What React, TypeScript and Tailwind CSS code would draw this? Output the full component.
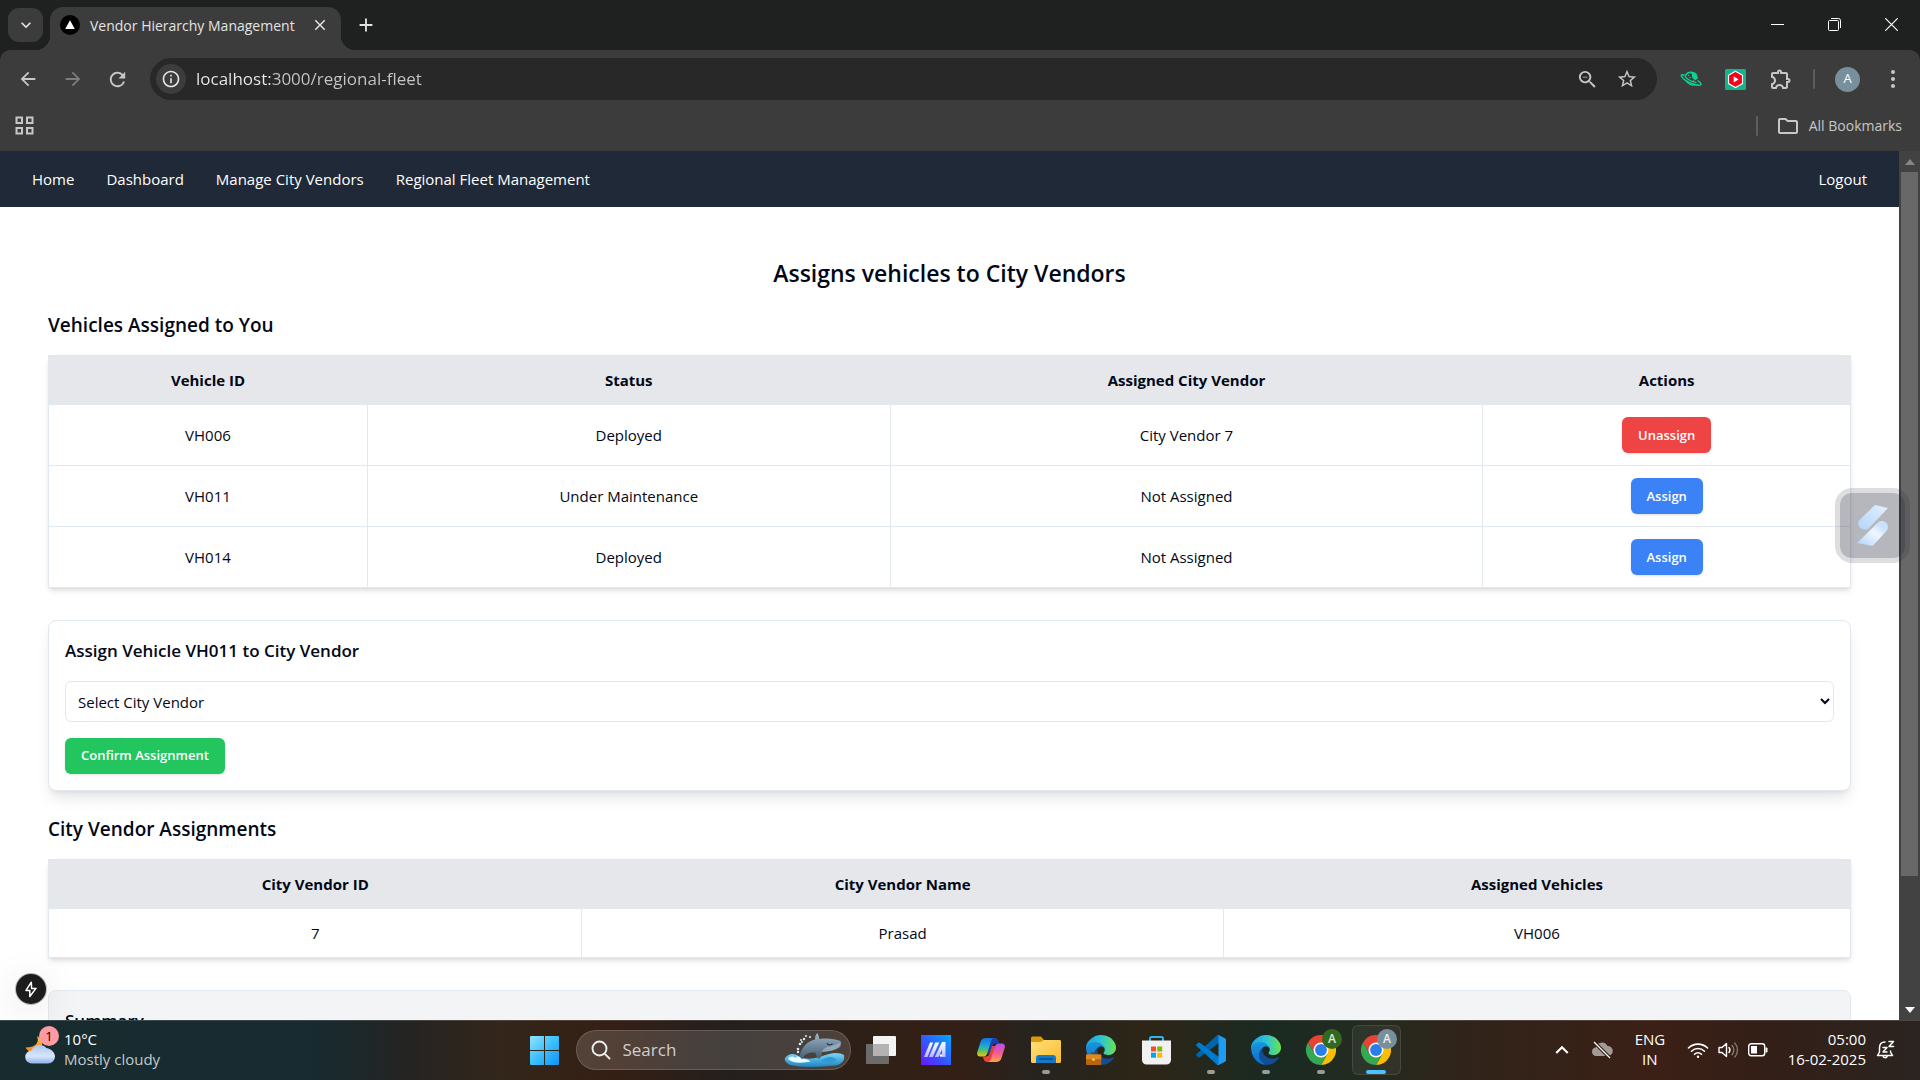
import type { ReactNode } from "react";
import {
  MdArrowBack,
  MdArrowForward,
  MdClose,
  MdExpandMore,
  MdExpandLess,
  MdInfoOutline,
  MdAdd,
  MdRefresh,
  MdStarBorder,
  MdZoomOut,
  MdOutlineExtension,
  MdOutlineFolder,
} from "react-icons/md";

const vehicles = [
  { id: "VH006", status: "Deployed", vendor: "City Vendor 7", assigned: true },
  { id: "VH011", status: "Under Maintenance", vendor: "Not Assigned", assigned: false },
  { id: "VH014", status: "Deployed", vendor: "Not Assigned", assigned: false },
];

const navLinks = ["Home", "Dashboard", "Manage City Vendors", "Regional Fleet Management"];

/* ---------- Browser chrome ---------- */

function TabStrip() {
  return (
    <div className="flex h-[50px] items-stretch">
      <div className="flex items-center pl-2">
        <button aria-label="Search tabs" className="flex h-[34px] w-[35px] items-center justify-center rounded-[11px] bg-[#3c3c3c] text-[#e3e3e3]">
          <MdExpandMore size={20} />
        </button>
      </div>
      <div className="relative ml-[7px] mt-[7px] flex w-[291px] items-center rounded-t-[13px] bg-[#3c3c3c] pb-[7px] pl-[10px] pr-2">
        <span className="absolute -left-[14px] bottom-0 size-[14px] bg-[radial-gradient(circle_at_0_0,transparent_14px,#3c3c3c_14px)]" />
        <span className="absolute -right-[14px] bottom-0 size-[14px] bg-[radial-gradient(circle_at_100%_0,transparent_14px,#3c3c3c_14px)]" />
        <svg width="20" height="20" viewBox="0 0 20 20" aria-hidden="true">
          <circle cx="10" cy="10" r="10" fill="#000" />
          <path d="M10 5.2 14.8 14H5.2z" fill="#fff" />
        </svg>
        <span className="ml-[10px] flex-1 whitespace-nowrap text-[14px] text-[#e3e3e3]">Vendor Hierarchy Management</span>
        <button aria-label="Close tab" className="flex size-[26px] items-center justify-center text-[#e3e3e3]">
          <MdClose size={18} />
        </button>
      </div>
      <button aria-label="New tab" className="ml-[13px] flex w-6 items-center justify-center text-[#e3e3e3]">
        <MdAdd size={22} />
      </button>
      <div className="flex-1" />
      <button aria-label="Minimize" className="flex h-12 w-[57px] items-center justify-center">
        <span className="h-px w-[13px] bg-white" />
      </button>
      <button aria-label="Restore" className="flex h-[49px] w-[57px] items-center justify-center">
        <svg width="13" height="13" viewBox="0 0 13 13" fill="none" stroke="#fff" aria-hidden="true">
          <rect x=".5" y="2.5" width="10" height="10" rx="1" />
          <path d="M3 .5h7.5a2 2 0 0 1 2 2V10" />
        </svg>
      </button>
      <button aria-label="Close window" className="flex h-[49px] w-[57px] items-center justify-center">
        <svg width="13" height="13" viewBox="0 0 13 13" stroke="#fff" strokeWidth="1.2" aria-hidden="true">
          <path d="M.3.3l12.4 12.4M12.7.3.3 12.7" />
        </svg>
      </button>
    </div>
  );
}

function PlanetIcon() {
  return (
    <svg width="22" height="20" viewBox="0 0 22 20" fill="none" stroke="#0bd394" aria-hidden="true">
      <path d="M5.2 7.6C6 4.500 8.600 3.300 11 3.300c4 0 6 2.700 6.200 6.200" strokeWidth="1.600" />
      <path d="M10 3.200c4.500-.4 7.200 2.600 7.300 6.600l-2 1.400C12.500 10 11.500 7.500 12 5.500z" fill="#0bd394" stroke="none" />
      <path d="M4.600 5.900C1.600 5.300.9 6 1.400 7c1.400 2.800 6.600 6.300 11.600 8 4.800 1.600 8.400 1.500 8 0-.2-1-1.500-2.200-3.400-3.500" strokeWidth="1.500" />
      <path d="M5 7.300c2.500 3.200 7 5.500 11.500 6" strokeWidth="1.300" />
      <path d="M8 6.300h1M9.500 8.500h1.200M13 12h1" strokeWidth="1.300" />
      <path d="M6 11.500c2 3.800 6 5.200 9.600 4" strokeWidth="1.500" />
    </svg>
  );
}

function PlayHexIcon() {
  return (
    <svg width="21" height="21" viewBox="0 0 21 21" aria-hidden="true">
      <rect width="21" height="21" rx="1.500" fill="#13b38b" />
      <path d="M10.500 2.200l7 4v8.400l-7 4-7-4V6.200z" fill="#f5001d" stroke="#fff" strokeWidth="1.100" />
      <path d="M8.700 7.300l4.800 3.100-4.800 3.100z" fill="#fff" />
    </svg>
  );
}

function Toolbar() {
  return (
    <div className="flex h-[58px] items-center px-[5px] text-[#c7c7c7]">
      <button aria-label="Back" className="flex w-[45px] justify-center"><MdArrowBack size={22} /></button>
      <button aria-label="Forward" className="flex w-[45px] justify-center text-[#7c7c7c]"><MdArrowForward size={22} /></button>
      <button aria-label="Reload" className="flex w-[45px] justify-center"><MdRefresh size={23} /></button>
      <div className="ml-[10px] flex h-[42px] flex-1 items-center rounded-full bg-[#282828] pl-[6px] pr-[10px]">
        <button aria-label="View site information" className="flex size-[30px] items-center justify-center rounded-full bg-[#3c3c3c] text-[#e3e3e3]">
          <MdInfoOutline size={20} />
        </button>
        {/* The host part of the address is brighter than the rest. */}
        <input
          aria-label="Address"
          defaultValue="localhost:3000/regional-fleet"
          className="ml-[10px] min-w-0 flex-1 bg-[linear-gradient(90deg,#ececec_76px,#c7c7c7_76px)] bg-clip-text text-[17px] leading-7 text-transparent outline-none"
        />
        <button aria-label="Zoom" className="flex w-10 justify-center"><MdZoomOut size={23} /></button>
        <button aria-label="Bookmark this tab" className="flex w-10 justify-center"><MdStarBorder size={22} /></button>
      </div>
      <button aria-label="Planet extension" className="ml-[11px] flex w-[45px] justify-center"><PlanetIcon /></button>
      <button aria-label="Video extension" className="flex w-[45px] justify-center"><PlayHexIcon /></button>
      <button aria-label="Extensions" className="flex w-[45px] justify-center"><MdOutlineExtension size={24} /></button>
      <div className="flex w-[22px] justify-center"><span className="h-5 w-[2px] rounded-full bg-[#5e5e5e]" /></div>
      <button aria-label="Profile" className="flex w-[45px] justify-center">
        <span className="flex size-[25px] items-center justify-center rounded-full bg-[#78909c] text-[13px] text-white">A</span>
      </button>
      <button aria-label="Menu" className="flex w-[45px] justify-center">
        <svg width="4" height="18" viewBox="0 0 4 18" fill="#c7c7c7" aria-hidden="true">
          <circle cx="2" cy="2" r="2" /><circle cx="2" cy="9" r="2" /><circle cx="2" cy="16" r="2" />
        </svg>
      </button>
    </div>
  );
}

function BookmarksBar() {
  return (
    <div className="flex h-[43px] items-center pb-2 pl-[15px] pr-[18px] text-[#c7c7c7]">
      <button aria-label="Apps">
        <svg width="19" height="19" viewBox="0 0 19 19" fill="none" stroke="#c7c7c7" strokeWidth="2" aria-hidden="true">
          <path d="M1.500 1.500h5.500v5.500H1.500zM12 1.500h5.500v5.500H12zM1.500 12h5.500v5.500H1.500zM12 12h5.500v5.500H12z" />
        </svg>
      </button>
      <div className="flex-1" />
      <span className="h-5 w-[2px] rounded-full bg-[#5e5e5e]" />
      <button className="ml-[18px] flex items-center gap-[9px] whitespace-nowrap text-[14px]">
        <MdOutlineFolder size={24} />
        All Bookmarks
      </button>
    </div>
  );
}

/* ---------- Page ---------- */

function PageNav() {
  return (
    <nav className="flex h-14 items-center justify-between bg-[#1f2937] px-8 text-[15px] text-white">
      <div className="flex gap-8">
        {navLinks.map((label) => (
          <a key={label} href="#" className="whitespace-nowrap">{label}</a>
        ))}
      </div>
      <a href="#">Logout</a>
    </nav>
  );
}

function Th({ className = "", children }: { className?: string; children: ReactNode }) {
  return <th scope="col" className={`border border-[#e2e8f0] bg-[#e5e7eb] px-4 py-3 font-bold ${className}`}>{children}</th>;
}

function Td({ children }: { children: ReactNode }) {
  return <td className="border border-[#e2e8f0] px-4 py-3">{children}</td>;
}

const buttonBase = "h-9 rounded-md px-4 text-[13px] font-semibold text-white shadow-sm";
const tableBase = "w-full border-collapse text-center text-[15px] leading-6 shadow-md";
const sectionHeading = "mb-4 text-[19px] leading-7 font-semibold";

function FleetPage() {
  return (
    <main className="px-12 pt-12 text-[#020817]">
      <h1 className="mb-5 text-center text-[23px] leading-9 font-semibold">Assigns vehicles to City Vendors</h1>

      <h2 className={sectionHeading}>Vehicles Assigned to You</h2>
      <table className={tableBase}>
        <thead>
          <tr>
            <Th className="w-[17.7%]">Vehicle ID</Th>
            <Th className="w-[29%]">Status</Th>
            <Th className="w-[32.9%]">Assigned City Vendor</Th>
            <Th className="w-[20.4%]">Actions</Th>
          </tr>
        </thead>
        <tbody>
          {vehicles.map((v) => (
            <tr key={v.id}>
              <Td>{v.id}</Td>
              <Td>{v.status}</Td>
              <Td>{v.vendor}</Td>
              <Td>
                <div className="flex justify-center">
                  {v.assigned ? (
                    <button className={`${buttonBase} bg-[#ef4444]`}>Unassign</button>
                  ) : (
                    <button className={`${buttonBase} bg-[#3b82f6]`}>Assign</button>
                  )}
                </div>
              </Td>
            </tr>
          ))}
        </tbody>
      </table>

      <section className="mt-8 rounded-lg border border-[#e2e8f0] bg-white p-4 shadow-lg">
        <h3 className="mb-4 text-[17px] leading-7 font-semibold">
          <label htmlFor="vendor">Assign Vehicle VH011 to City Vendor</label>
        </h3>
        <select id="vendor" className="mb-4 block h-[41px] w-full rounded-md border border-[#e2e8f0] bg-white px-2 text-[15px]">
          <option>Select City Vendor</option>
          <option>Prasad</option>
        </select>
        <button className={`${buttonBase} block bg-[#22c55e]`}>Confirm Assignment</button>
      </section>

      <h2 className={`${sectionHeading} mt-6`}>City Vendor Assignments</h2>
      <table className={tableBase}>
        <thead>
          <tr>
            <Th className="w-[29.6%]">City Vendor ID</Th>
            <Th className="w-[35.6%]">City Vendor Name</Th>
            <Th>Assigned Vehicles</Th>
          </tr>
        </thead>
        <tbody>
          <tr>
            <Td>7</Td>
            <Td>Prasad</Td>
            <Td>VH006</Td>
          </tr>
        </tbody>
      </table>

      <section className="mt-8 rounded-lg border border-[#e2e8f0] bg-[#f3f4f6] p-4">
        <h3 className="text-[17px] leading-7 font-semibold">Summary</h3>
      </section>
    </main>
  );
}

function Scrollbar() {
  return (
    <div aria-hidden="true" className="flex w-[21px] shrink-0 flex-col items-center bg-[#424242]">
      <span className="flex h-[21px] items-center">
        <svg width="10" height="6" viewBox="0 0 10 6"><path d="M5 0l5 6H0z" fill="#868686" /></svg>
      </span>
      <span className="min-h-0 w-[17px] flex-[704] bg-[#686868]" />
      <span className="min-h-0 flex-[123]" />
      <span className="flex h-[21px] items-center">
        <svg width="10" height="6" viewBox="0 0 10 6"><path d="M0 0h10L5 6z" fill="#fff" /></svg>
      </span>
    </div>
  );
}

function FloatingWidget() {
  return (
    <button aria-label="Open assistant" className="absolute right-[10px] top-[337px] size-[75px] rounded-[17px] bg-[#1f2339]/15 p-[5px]">
      <span className="flex size-full items-center justify-center rounded-xl bg-[#1a1c2a]/20">
        <svg width="32" height="42" viewBox="0 0 32 42" aria-hidden="true">
          <defs>
            <linearGradient id="wing-a" x1="1" y1="0" x2="0" y2="1">
              <stop offset="0" stopColor="#e3f1ff" /><stop offset="1" stopColor="#b3d4fa" />
            </linearGradient>
            <linearGradient id="wing-b" x1="1" y1="0" x2="0" y2="1">
              <stop offset=".2" stopColor="#c9e1fb" /><stop offset=".45" stopColor="#eef7ff" /><stop offset="1" stopColor="#aed0f8" />
            </linearGradient>
          </defs>
          <path d="M18 0l13 3L11 24c-2 1.500-5 .5-7.500-1C.5 20.500.5 17 3 14.500z" fill="url(#wing-a)" />
          <path d="M22 16.500c2-1.200 5-.5 7 1 2.500 2.500 2.500 6 .5 8.500L15.500 41 0 38z" fill="url(#wing-b)" />
        </svg>
      </span>
    </button>
  );
}

function DevBadge() {
  return (
    <button aria-label="Build status" className="absolute bottom-4 left-4 flex size-[30px] items-center justify-center rounded-full bg-[#1c1c1c] shadow-[0_0_0_1px_#33333355,0_8px_40px_0_rgba(0,0,0,0.14)]">
      <svg width="12" height="17" viewBox="0 0 12 17" fill="none" stroke="#fff" strokeWidth="1.500" strokeLinejoin="round" aria-hidden="true">
        <path d="M6.300 1.200 1 9.400h3.800V15.500L11 7.400H6.600z" />
      </svg>
    </button>
  );
}

/* ---------- Taskbar icons ---------- */

function WeatherIcon() {
  return (
    <svg width="30" height="30" viewBox="0 0 30 30" aria-hidden="true">
      <defs>
        <linearGradient id="moon" x1="0" y1="0" x2="0" y2="1">
          <stop offset="0" stopColor="#f9c22e" /><stop offset="1" stopColor="#f08a1c" />
        </linearGradient>
        <linearGradient id="cloud" x1="0" y1="0" x2="0" y2="1">
          <stop offset="0" stopColor="#a9c7f7" /><stop offset=".6" stopColor="#d9e6fb" /><stop offset="1" stopColor="#8db0ee" />
        </linearGradient>
      </defs>
      <path d="M12 1c2.500 5 0 11.500-11.500 11.500C3 17 9 19 14 15s4-11-2-14z" fill="url(#moon)" />
      <path d="M7 28.500a6.500 6.500 0 0 1-.5-13A9 9 0 0 1 21.500 13c5 1 8.500 4.500 8.500 8.500a7 7 0 0 1-7 7z" fill="url(#cloud)" />
    </svg>
  );
}

function StartIcon() {
  return (
    <svg width="29" height="29" viewBox="0 0 29 29" aria-hidden="true">
      <defs>
        <linearGradient id="start" x1="0" y1="0" x2="1" y2="1">
          <stop offset="0" stopColor="#8fe3ff" /><stop offset=".5" stopColor="#3cc0fc" /><stop offset="1" stopColor="#0f93f5" />
        </linearGradient>
      </defs>
      <path d="M1 0h13v14H0V1a1 1 0 0 1 1-1zM15 0h13a1 1 0 0 1 1 1v13H15zM0 15h14v14H1a1 1 0 0 1-1-1zM15 15h14v13a1 1 0 0 1-1 1H15z" fill="url(#start)" />
    </svg>
  );
}

function WhaleIcon() {
  return (
    <svg width="62" height="34" viewBox="0 0 62 34" aria-hidden="true">
      <defs>
        <linearGradient id="whale" x1="0" y1="0" x2="0" y2="1">
          <stop offset="0" stopColor="#9db4c6" /><stop offset="1" stopColor="#435d74" />
        </linearGradient>
        <linearGradient id="sea" x1="0" y1="0" x2="0" y2="1">
          <stop offset="0" stopColor="#7fd6f5" /><stop offset="1" stopColor="#1b86c4" />
        </linearGradient>
      </defs>
      <path d="M1 25c4-5 10-5 15-1 10 4 19 0 29-3 6-2 12-1 15 1 1 5-1 8-6 10-12 2-36 3-48 0C3 30 0 28 1 25z" fill="url(#sea)" />
      <path d="M15 25C17 14 24 8 31 6.500 31 3 32 1 33.500 0c1 2 1.500 4 2 6 8-1 16 0 21 2 1 2 1 4-.5 6-5 3.500-12 4.500-18 5 0 3-1 5-3 7-2-2-3.500-4-3.500-6.500-7 0-11 1-12.500 6z" fill="url(#whale)" />
      <path d="M56 10c-4 2-8 3-13 4-3 2-5 3-5 5 6-.5 11-1.500 14-3 3-1.500 4.500-3.500 4-6z" fill="#b9c8d4" opacity=".55" />
      <path d="M43 10c1 2.500 4 2.500 5.500.500" stroke="#243442" strokeWidth="1.200" fill="none" />
      <path d="M4 26c2-3 5-3 7-1 3-3 6-1 6.500 1.500 3-1 7 0 9 2C20 30 9 31 4 26z" fill="#eafaff" />
      <g fill="#d5effb"><circle cx="14" cy="16" r="1.300" /><circle cx="16" cy="11" r="1.300" /><circle cx="20" cy="6" r="1.200" /><circle cx="17" cy="7" r="1" /><circle cx="26" cy="4" r="1" /><circle cx="14" cy="19" r="1.200" /><circle cx="22" cy="3" r="1" /><circle cx="18" cy="9" r="1" /></g>
      <path d="M37 28c6-5 12-5 16-1-4 3-10 3-16 1z" fill="#2c9bd6" />
    </svg>
  );
}

function TaskViewIcon() {
  return (
    <svg width="30" height="28" viewBox="0 0 30 28" aria-hidden="true">
      <rect y="8" width="23" height="20" rx="1" fill="#6b6b6b" />
      <rect x="7" width="23" height="20" rx="1" fill="#f3f3f3" />
      <rect x="7" y="8" width="16" height="12" fill="#b5b3b2" />
    </svg>
  );
}

function SlashAppIcon() {
  return (
    <svg width="30" height="30" viewBox="0 0 30 30" aria-hidden="true">
      <defs>
        <linearGradient id="slash" x1="1" y1="0" x2="0" y2="1">
          <stop offset="0" stopColor="#00a8ff" /><stop offset=".5" stopColor="#2f5dff" /><stop offset="1" stopColor="#6a14ff" />
        </linearGradient>
        <linearGradient id="stroke" x1="0" y1="0" x2="0" y2="1">
          <stop offset="0" stopColor="#fff" /><stop offset="1" stopColor="#b9b8ff" />
        </linearGradient>
      </defs>
      <rect width="30" height="30" fill="url(#slash)" />
      <path d="M3 22 9 7.500h3.200L6.500 22z" fill="url(#stroke)" />
      <path d="M8 22 14.200 7.500h4L11.800 22z" fill="url(#stroke)" />
      <path d="M13.800 22 21 7h3.500v15H21v-7.500L17.500 22z" fill="url(#stroke)" />
      <circle cx="20" cy="20.500" r="1.300" fill="#fff" />
    </svg>
  );
}

function CopilotIcon() {
  return (
    <svg width="28" height="26" viewBox="0 0 28 26" aria-hidden="true">
      <defs>
        <linearGradient id="cop-a" x1="0" y1="0" x2="0" y2="1">
          <stop offset="0" stopColor="#1b6fe0" /><stop offset=".4" stopColor="#14a6dc" /><stop offset=".7" stopColor="#5fc25c" /><stop offset="1" stopColor="#f2c400" />
        </linearGradient>
        <linearGradient id="cop-b" x1="0" y1="0" x2="0" y2="1">
          <stop offset="0" stopColor="#b44ff0" /><stop offset=".5" stopColor="#ee5a94" /><stop offset="1" stopColor="#ffa14a" />
        </linearGradient>
      </defs>
      <path d="M14 1h4c2 0 3 1.500 3.500 3l.8 2.500H19c-2 0-3 1-3.600 3L13 17H10z" fill="#1c3fae" />
      <path d="M14 25h-4c-2 0-3-1.500-3.500-3L6 19.500h3c2 0 3-1 3.600-3L15 9h3z" fill="#e8423c" />
      <path d="M9 1h8c-2 .5-2.700 2-3.300 4l-3 10c-.8 3-2 4.500-4.700 4.500H3C.5 19.500-.3 17.500.3 15L3.500 5C4.300 2.400 6 1 9 1z" fill="url(#cop-a)" />
      <path d="M19 25h-8c2-.5 2.700-2 3.300-4l3-10c.8-3 2-4.500 4.700-4.500h3c2.500 0 3.300 2 2.700 4.500l-3.200 10c-.8 2.600-2.500 4-5.500 4z" fill="url(#cop-b)" />
    </svg>
  );
}

function FolderIcon() {
  return (
    <svg width="30" height="28" viewBox="0 0 30 28" aria-hidden="true">
      <defs>
        <linearGradient id="folder" x1="0" y1="0" x2="1" y2="1">
          <stop offset="0" stopColor="#ffe07a" /><stop offset="1" stopColor="#f9bb2d" />
        </linearGradient>
      </defs>
      <path d="M0 2a1.500 1.500 0 0 1 1.500-1.500H10L13 4h15.500A1.500 1.500 0 0 1 30 5.500V8H0z" fill="#d99a06" />
      <path d="M0 6h10l3-2h15.500A1.500 1.500 0 0 1 30 5.500v20a1.500 1.500 0 0 1-1.500 1.500h-27A1.500 1.500 0 0 1 0 25.500z" fill="url(#folder)" />
      <path d="M5 27v-5a3 3 0 0 1 3-3h14a3 3 0 0 1 3 3v5z" fill="#1579c8" />
      <path d="M8.500 23h13" stroke="#0b4b8a" strokeWidth="1.400" strokeLinecap="round" />
    </svg>
  );
}

function EdgeIcon({ work = false }: { work?: boolean }) {
  return (
    <svg width="30" height="30" viewBox="0 0 256 256" aria-hidden="true">
      <defs>
        <linearGradient id="edge-a" x1="0" y1=".5" x2="1" y2=".5">
          <stop offset="0" stopColor="#1ba0e2" /><stop offset=".5" stopColor="#2cc3d5" /><stop offset="1" stopColor="#6be34d" />
        </linearGradient>
        <linearGradient id="edge-b" x1="0" y1="0" x2="0" y2="1">
          <stop offset="0" stopColor="#1b9de2" /><stop offset="1" stopColor="#0a6ccc" />
        </linearGradient>
      </defs>
      <path d="M231 190.500a93.700 93.700 0 0 1-10.500 4.700 101.900 101.900 0 0 1-35.900 6.500c-47.300 0-88.500-32.500-88.500-74.300a31.500 31.500 0 0 1 16.400-27.300c-42.800 1.800-53.800 46.400-53.800 72.500 0 74 68.100 81.400 82.800 81.400 7.900 0 19.800-2.300 27-4.600l1.300-.4a128.300 128.300 0 0 0 66.600-52.800 4 4 0 0 0-5.400-5.700z" fill="#104f98" />
      <path d="M105.700 241.400a79.200 79.200 0 0 1-22.700-21.300 80.700 80.700 0 0 1 29.500-120c3.200-1.500 8.500-4.100 15.600-4a32.400 32.400 0 0 1 25.700 13c0-.2 24.400-79.600-80-79.600C29.900 29.500 0 71 0 107.500 0 190 60 256 128 256c-8-2-15-8-22.300-14.600z" fill="url(#edge-b)" />
      <path d="M152.300 148.900c-.8 1-3.300 2.500-3.300 5.700 0 2.600 1.700 5.100 4.700 7.200 14.400 10 41.500 8.700 41.600 8.700a59.600 59.600 0 0 0 30.300-8.300A61.400 61.400 0 0 0 256 109.200c.3-22.400-8-37.300-11.300-43.900C223.500 23.900 177.700 0 128 0A128 128 0 0 0 0 126.200c.5-36.500 36.800-66 80-66 3.500 0 23.500.3 42 10 16.300 8.600 24.900 18.900 30.800 29.200 6.200 10.700 7.300 24.100 7.300 29.500s-2.700 13.300-7.800 20z" fill="url(#edge-a)" />
      {work && (
        <g>
          <path d="M48 166v-12h34v12" fill="none" stroke="#7a3c05" strokeWidth="10" />
          <rect y="166" width="130" height="90" rx="8" fill="#b9640e" />
          <rect y="166" width="130" height="40" rx="8" fill="#e08a1e" />
          <rect x="54" y="200" width="20" height="20" fill="#ffd35c" />
        </g>
      )}
    </svg>
  );
}

function StoreIcon() {
  return (
    <svg width="29" height="30" viewBox="0 0 29 30" aria-hidden="true">
      <path d="M8 7V3.500A1.500 1.500 0 0 1 9.500 2h10A1.500 1.500 0 0 1 21 3.500V7" fill="none" stroke="#29b6f2" strokeWidth="2" />
      <path d="M0 5.500h29V25a4.500 4.500 0 0 1-4.500 4.500h-20A4.500 4.500 0 0 1 0 25z" fill="#f1f1f1" />
      <path d="M9 11.500h5v5H9z" fill="#f25022" /><path d="M15.200 11.500h5v5h-5z" fill="#7fba00" />
      <path d="M9 17.700h5v5H9z" fill="#00a4ef" /><path d="M15.200 17.700h5v5h-5z" fill="#ffb900" />
    </svg>
  );
}

function CodeIcon() {
  return (
    <svg width="30" height="30" viewBox="0 0 100 100" aria-hidden="true">
      <path d="M96 11 76 1a6 6 0 0 0-7 1L2 63a4 4 0 0 0 0 6l6 5a4 4 0 0 0 5 0L94 13c3-2 6 0 6 3z" fill="#0065a9" />
      <path d="M96 89 76 99a6 6 0 0 1-7-1L2 37a4 4 0 0 1 0-6l6-5a4 4 0 0 1 5 0l81 61c3 2 6 0 6-3z" fill="#007acc" />
      <path d="M76 99a6 6 0 0 1-7-1c2 2 6 1 6-3V5c0-4-4-5-6-3a6 6 0 0 1 7-1l20 10a6 6 0 0 1 4 6v66a6 6 0 0 1-4 6z" fill="#1f9cf0" />
    </svg>
  );
}

function ChromeIcon() {
  return (
    <svg width="30" height="30" viewBox="0 0 48 48" aria-hidden="true">
      <path d="M24 12h20.800A24 24 0 0 0 3.200 12l10.400 18z" fill="#ea4335" />
      <path d="M34.400 30 24 48A24 24 0 0 0 44.800 12H24z" fill="#fbbc04" />
      <path d="M13.600 30 3.200 12A24 24 0 0 0 24 48l10.400-18z" fill="#34a853" />
      <circle cx="24" cy="24" r="12" fill="#fff" />
      <circle cx="24" cy="24" r="9.500" fill="#2b7de9" />
    </svg>
  );
}

function TaskItem({ label, running = false, active = false, children }: { label: string; running?: boolean; active?: boolean; children: ReactNode }) {
  return (
    <button aria-label={label} className="relative flex h-[60px] w-[55px] items-center justify-center">
      {active && <span className="absolute inset-x-[3px] inset-y-[5px] rounded-md border border-white/10 bg-white/5" />}
      <span className="relative">{children}</span>
      {running && <span className="absolute bottom-[6px] h-1 w-2 rounded-full bg-[#9b9b98]" />}
      {active && <span className="absolute bottom-[6px] h-1 w-5 rounded-full bg-[#4cc2ff]" />}
    </button>
  );
}

function ProfileBadge({ className }: { className: string }) {
  return (
    <span className={`absolute -right-[6px] -top-[6px] flex size-5 items-center justify-center rounded-full text-[12px] font-semibold text-white/85 ${className}`}>A</span>
  );
}

function Tray() {
  return (
    <div className="flex items-center justify-end pr-[24px] text-[15px] leading-5 text-white">
      <button aria-label="Show hidden icons"><MdExpandLess size={26} /></button>
      <svg className="ml-4" width="22" height="18" viewBox="0 0 22 18" aria-hidden="true">
        <path d="M5 15a4.300 4.300 0 0 1-.5-8.500A6.500 6.500 0 0 1 16.500 5 5 5 0 0 1 17 15z" fill="#a39a96" />
        <path d="M3 1l16 16" stroke="#2e1d15" strokeWidth="3.500" /><path d="M3 1l16 16" stroke="#fff" strokeWidth="1.300" />
      </svg>
      <button className="ml-[22px] w-[30px] pb-[2px] text-center">ENG<br />IN</button>
      <svg className="ml-[22px]" width="22" height="18" viewBox="0 0 22 18" fill="none" stroke="#fff" strokeWidth="1.600" strokeLinecap="round" aria-hidden="true">
        <path d="M1.500 7a13.500 13.500 0 0 1 19 0M4.500 10.200a9.300 9.300 0 0 1 13 0M7.500 13.300a5 5 0 0 1 7 0" />
        <circle cx="11" cy="15.800" r="1.200" fill="#fff" stroke="none" />
      </svg>
      <svg className="ml-[9px]" width="21" height="18" viewBox="0 0 21 18" fill="none" stroke="#fff" strokeWidth="1.400" strokeLinejoin="round" strokeLinecap="round" aria-hidden="true">
        <path d="M1 6.500h3L8.500 2.500v13L4 11.500H1z" />
        <path d="M11 6.500a4 4 0 0 1 0 5" />
        <path d="M14 4.300a7 7 0 0 1 0 9.400M16.800 2a10.500 10.500 0 0 1 0 14" stroke="#85746d" />
      </svg>
      <svg className="ml-[9px]" width="20" height="14" viewBox="0 0 20 14" aria-hidden="true">
        <rect x=".7" y=".7" width="16" height="12" rx="2.500" fill="none" stroke="#fff" strokeWidth="1.400" />
        <rect x="3" y="3" width="6" height="7.500" fill="#fff" /><path d="M17.500 4.500h1A1 1 0 0 1 19.500 5.500v3a1 1 0 0 1-1 1h-1z" fill="#fff" />
      </svg>
      <button className="ml-5 pb-[2px] text-right whitespace-nowrap">05:00<br />16-02-2025</button>
      <svg className="ml-[10px]" width="20" height="20" viewBox="0 0 20 20" fill="none" stroke="#fff" strokeWidth="1.500" strokeLinejoin="round" strokeLinecap="round" aria-hidden="true">
        <path d="M9 2C5.500 2 3.500 4.500 3.500 8v4L1.500 15.500h15L14.500 12v-1M7 16c.3 2.300 3.800 2.300 4.200 0" />
        <path d="M7 7.500h4l-4 4.500h4M13 1.500h4.500L13 6.500h4.500" />
      </svg>
    </div>
  );
}

function Taskbar() {
  return (
    <footer className="grid h-[60px] shrink-0 grid-cols-[1fr_auto_1fr] bg-[linear-gradient(90deg,#182c2f_0%,#172b31_16%,#242423_21%,#33261a_26%,#351f14_32%,#241f1e_38%,#302016_46%,#331f15_50%,#26231f_54%,#2d2617_60%,#1a2a22_66%,#232b20_71%,#30241a_76%,#3b2016_86%,#331f17_92%,#2b2420_100%)] shadow-[inset_0_1px_0_rgba(255,255,255,0.15)]">
      <div className="flex items-center pl-[25px]">
        <button className="relative flex items-center gap-[9px] text-left text-[15px] leading-5">
          <WeatherIcon />
          <span className="absolute left-[14px] -top-[3px] flex size-5 items-center justify-center rounded-full bg-[#ff99a4] text-[13px] text-black">1</span>
          <span className="pb-[2px] text-[#c3c9ca]"><span className="text-white">10°C</span><br />Mostly cloudy</span>
        </button>
      </div>
      <div className="flex items-center">
        <TaskItem label="Start"><StartIcon /></TaskItem>
        <div className="ml-1 mr-[3px] flex h-10 w-[275px] items-center rounded-full border border-white/15 bg-white/15 pl-[14px] pr-1">
          <svg width="20" height="20" viewBox="0 0 20 20" fill="none" stroke="#eee" strokeWidth="1.900" strokeLinecap="round" aria-hidden="true">
            <circle cx="8.500" cy="8.500" r="7" /><path d="M13.800 13.800l4.700 4.700" />
          </svg>
          <input aria-label="Search" placeholder="Search" className="ml-3 min-w-0 flex-1 bg-transparent text-[17px] leading-7 text-white outline-none placeholder:text-[#d2cdca]" />
          <WhaleIcon />
        </div>
        <TaskItem label="Task view"><TaskViewIcon /></TaskItem>
        <TaskItem label="MyAsus"><SlashAppIcon /></TaskItem>
        <TaskItem label="Copilot"><CopilotIcon /></TaskItem>
        <TaskItem label="File Explorer" running><FolderIcon /></TaskItem>
        <TaskItem label="Edge for work"><EdgeIcon work /></TaskItem>
        <TaskItem label="Microsoft Store"><StoreIcon /></TaskItem>
        <TaskItem label="Visual Studio Code" running><CodeIcon /></TaskItem>
        <TaskItem label="Edge" running><EdgeIcon /></TaskItem>
        <TaskItem label="Chrome" running><ChromeIcon /><ProfileBadge className="bg-[#33691e]" /></TaskItem>
        <TaskItem label="Chrome, current window" active><ChromeIcon /><ProfileBadge className="bg-[#78909c]" /></TaskItem>
      </div>
      <Tray />
    </footer>
  );
}

export default function App() {
  return (
    <div className="flex h-screen flex-col overflow-hidden font-['Open_Sans',sans-serif]">
      <header className="shrink-0 bg-[#1f2120]">
        <TabStrip />
        <div className="rounded-t-[10px] bg-[#3c3c3c]">
          <Toolbar />
          <BookmarksBar />
        </div>
      </header>
      <div className="relative flex min-h-0 flex-1">
        <div className="relative min-w-0 flex-1 overflow-hidden bg-white">
          <PageNav />
          <FleetPage />
          <DevBadge />
        </div>
        <Scrollbar />
        <FloatingWidget />
      </div>
      <Taskbar />
    </div>
  );
}
